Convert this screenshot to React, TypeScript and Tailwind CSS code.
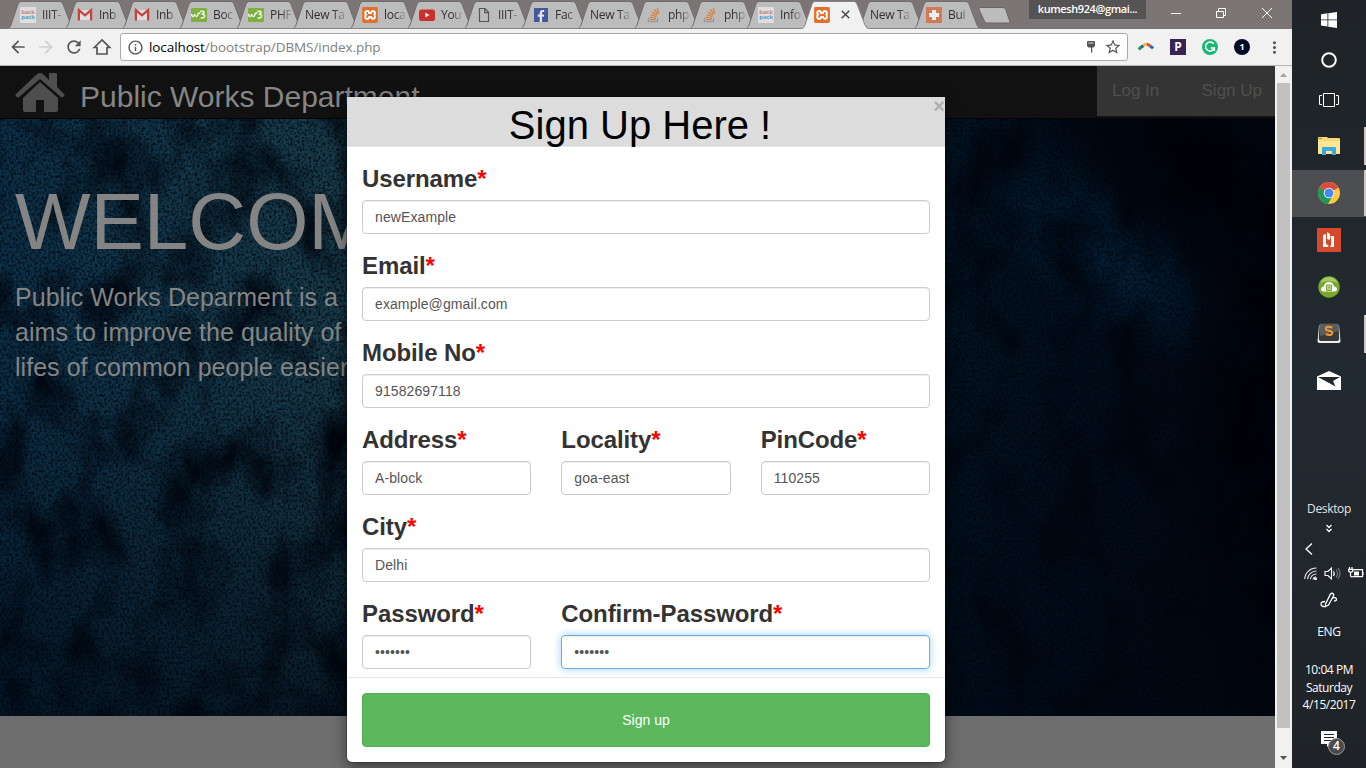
import React from "react";
import { SiXampp } from "react-icons/si";
import { FaStackOverflow, FaFacebookF, FaChrome } from "react-icons/fa";
import { MdArrowBack, MdArrowForward, MdRefresh, MdInfoOutline, MdStarBorder, MdMoreVert } from "react-icons/md";

type IconKind = "backpack" | "gmail" | "w3" | "xampp" | "youtube" | "file" | "facebook" | "stack" | "plus" | "none";

const tabs: { icon: IconKind; label: string; active?: boolean }[] = [
  { icon: "backpack", label: "IIIT-" },
  { icon: "gmail", label: "Inb" },
  { icon: "gmail", label: "Inb" },
  { icon: "w3", label: "Boc" },
  { icon: "w3", label: "PHF" },
  { icon: "none", label: "New Ta" },
  { icon: "xampp", label: "loca" },
  { icon: "youtube", label: "You" },
  { icon: "file", label: "IIIT-" },
  { icon: "facebook", label: "Fac" },
  { icon: "none", label: "New Ta" },
  { icon: "stack", label: "php" },
  { icon: "stack", label: "php" },
  { icon: "backpack", label: "Info" },
  { icon: "xampp", label: "", active: true },
  { icon: "none", label: "New Ta" },
  { icon: "plus", label: "Bui" },
];

function Favicon({ kind }: { kind: IconKind }) {
  switch (kind) {
    case "backpack":
      return (
        <span className="flex h-4 w-4 flex-col items-center justify-center bg-[#dedede] text-[6px] leading-[5px] font-bold tracking-[-0.2px]">
          <span className="text-[#cf8565]">back</span>
          <span className="text-[#5a9bc4]">pack</span>
        </span>
      );
    case "gmail":
      return (
        <svg width="16" height="16" viewBox="0 0 16 16">
          <path d="M2 3h12v10H2z" fill="#dedede" />
          <path d="M1.9 13.5V3.2L8 8.4l6.1-5.2v10.3" fill="none" stroke="#c5433c" strokeWidth="2.2" />
        </svg>
      );
    case "w3":
      return (
        <svg width="16" height="16" viewBox="0 0 16 16">
          <rect y="1" width="16" height="14" rx="1" fill="#7fb03f" />
          <path d="M.5 6.800c.3 3.400 2.700 3.600 3.200.4.500 3.200 3 3 3.400-.2.500-1.200 1.400-1.200 2.200-.6M9.300 4.500q3.700-1 3.700.8 0 1.700-2.300 1.800 3.400 0 2.800 2.400-.8 2.300-3.800 1.300" fill="none" stroke="#f1f5e9" strokeWidth="1.500" />
        </svg>
      );
    case "xampp":
      return (
        <span className="relative flex h-4 w-4 rounded-[3px] bg-white text-[#e0702c]">
          <SiXampp size={16} />
        </span>
      );
    case "youtube":
      return (
        <svg width="16" height="16" viewBox="0 0 16 16">
          <rect y="2.500" width="16" height="11.500" rx="2.500" fill="#c9302c" />
          <path d="M6.300 5.600v5l4.200-2.500z" fill="#eee" />
        </svg>
      );
    case "file":
      return (
        <svg width="16" height="16" viewBox="0 0 16 16">
          <path d="M3.500 1.500h5.500l3.500 3.800v9.200h-9zM8.700 1.800v3.900h3.600" fill="none" stroke="#555" strokeWidth="1.200" />
        </svg>
      );
    case "facebook":
      return (
        <span className="flex h-[14px] w-[14px] items-end justify-end bg-[#42599a] pr-px text-[#e5e5e5]">
          <FaFacebookF size={12} />
        </span>
      );
    case "stack":
      return (
        <svg width="16" height="16" viewBox="0 0 16 16" fill="none">
          <path d="M2.500 10.500v4h9v-4" stroke="#9b9b9b" strokeWidth="1.300" />
          <path d="M4 12.500h6M4.100 10.400l6 .6M4.600 7.800l5.800 1.700M5.800 5l5.200 3.200M8.200 2.300l3.600 4.900M11.400.7l1.200 5.900" stroke="#d9792f" strokeWidth="1.100" />
        </svg>
      );
    case "plus":
      return (
        <svg width="16" height="16" viewBox="0 0 16 16">
          <rect width="16" height="16" fill="#d07b55" />
          <path d="M6 3h4v3h3v4h-3v3H6v-3H3V6h3z" fill="#eee" />
        </svg>
      );
    default:
      return null;
  }
}

function TabStrip() {
  return (
    <div className="flex h-[29px] w-[1292px] overflow-hidden bg-[#7b7575]">
      <div className="flex pl-[7px]">
        {tabs.map((t, i) => (
          <div
            key={i}
            className={
              t.active ? "relative z-10 h-[29px] w-[56px]" : i < 10 ? "relative h-[29px] w-[57px]" : "relative h-[29px] w-[56px]"
            }
          >
            <svg className="absolute top-0 left-0" width="69" height="29" viewBox="0 0 69 29">
              <path
                d="M0 29C3 28 3 27 4 25L11 4Q12 1.500 14 1.500H53Q55 1.500 56 4L64 25Q65 28.500 69 29"
                fill={t.active ? "#f1f1f1" : "#bcbcbc"}
                stroke={t.active ? "#8b8686" : "#716c6c"}
                strokeWidth="1"
              />
              {!t.active && <path d="M0 28.500H69" stroke="#8a8585" />}
            </svg>
            <div className="relative flex h-[29px] items-center gap-[6px] pl-[13px]">
              {t.icon !== "none" && (
                <span className="flex w-4 shrink-0 items-center justify-center">
                  <Favicon kind={t.icon} />
                </span>
              )}
              {t.active ? (
                <svg className="ml-[5px] shrink-0" width="9" height="9" viewBox="0 0 9 9">
                  <path d="M.7.7l7.600 7.600M8.300.7L.7 8.300" stroke="#4a4a4a" strokeWidth="1.500" />
                </svg>
              ) : (
                <span
                  className={
                    t.icon === "none"
                      ? "mt-px w-[40px] bg-linear-to-r from-[#2d2d2d] from-70% to-[#2d2d2d]/20 bg-clip-text text-[12px] tracking-[-0.3px] whitespace-nowrap text-transparent"
                      : "mt-px w-[22px] shrink-0 bg-linear-to-r from-[#2d2d2d] from-50% to-[#2d2d2d]/10 bg-clip-text text-[12px] tracking-[-0.3px] whitespace-nowrap text-transparent"
                  }
                >
                  {t.label}
                </span>
              )}
            </div>
          </div>
        ))}
      </div>
      <svg className="mt-[7px] ml-[9px]" width="34" height="17" viewBox="0 0 34 17">
        <path d="M2 .5h23q2 0 2.700 2l4 11.500q.6 2-1 2H9q-2 0-2.700-2L1 2.500Q.5.500 2 .5z" fill="#bcbcbc" stroke="#6b6565" />
      </svg>
      <div className="mr-[20px] ml-auto flex items-start">
        <div className="flex h-[19px] w-[117px] items-center justify-center bg-[#555353] text-[11px] font-semibold tracking-[-0.4px] text-white">
          kumesh924@gmai...
        </div>
        <svg className="ml-[25px]" width="101" height="28" viewBox="0 0 101 28" fill="none" stroke="#fff">
          <path d="M0 13.500h10M45.500 11.500h7v6h-7zM47.500 11V8.500h7v7H53M91 8l10 10M101 8L91 18" />
        </svg>
      </div>
    </div>
  );
}

function Toolbar() {
  return (
    <div className="flex h-[37px] w-[1292px] items-center border-b border-[#b5b5b5] bg-[#f1f1f1] text-[#555]">
      <div className="flex w-[120px] items-center gap-2 pl-2">
        <MdArrowBack size={20} />
        <MdArrowForward size={20} className="text-[#cfcfcf]" />
        <MdRefresh size={20} />
        <svg width="20" height="20" viewBox="0 0 20 20" fill="none" stroke="#555" strokeWidth="1.700">
          <path d="M2.300 10.500L10 3l7.700 7.500H15V17H5v-6.500z" />
        </svg>
      </div>
      <div className="flex h-7 w-[1008px] items-center rounded-[3px] border border-[#a9a9a9] bg-white pl-[6px]">
        <MdInfoOutline size={17} />
        <span className="ml-[5px] text-[13.500px] tracking-[-0.08px] text-[#808080]">
          <span className="text-black">localhost</span>/bootstrap/DBMS/index.php
        </span>
        <svg className="mr-[8px] ml-auto" width="10" height="14" viewBox="0 0 10 14">
          <path d="M1 2q0-1 1-1h6q1 0 1 1v4L7.500 7.500H6.300V12L5 13V7.500H2.500L1 6z" fill="#555" />
          <path d="M2.500 3h5" stroke="#ddd" />
        </svg>
        <MdStarBorder size={18} className="mr-[5px]" />
      </div>
      <div className="flex items-center gap-4 pl-[10px]">
        <svg width="16" height="16" viewBox="0 0 16 16" fill="none" strokeWidth="3">
          <path d="M.8 10.500Q2 9 4.500 7.200" stroke="#2b8b57" />
          <path d="M3.300 8.100L5.500 6.500" stroke="#2467ac" />
          <path d="M5.200 6.700Q7 5.200 9 5.300" stroke="#f0bd3a" />
          <path d="M8.800 5.300q2 .2 3.600 2" stroke="#df513c" />
          <path d="M12.200 7.200q1.800 1 3 2" stroke="#2467ac" />
        </svg>
        <span className="flex h-4 w-4 items-center justify-center bg-[#3a2353] text-[12px] font-bold text-white">P</span>
        <svg width="16" height="16" viewBox="0 0 16 16">
          <circle cx="8" cy="8" r="8" fill="#1cb777" />
          <path d="M11.700 4.800A4.500 4.500 0 1 0 12.300 9H8.700M12.400 9v3" fill="none" stroke="#fff" strokeWidth="1.500" />
        </svg>
        <span className="flex h-4 w-4 items-center justify-center rounded-full bg-[#050a25] text-[9px] font-bold text-white">1</span>
        <MdMoreVert size={19} className="-ml-px" />
      </div>
    </div>
  );
}

function GrungeBackdrop() {
  return (
    <svg className="absolute inset-0" width="1275" height="597" viewBox="0 0 1275 597">
      <defs>
        <linearGradient id="base" x1="0" y1="0" x2="1" y2="0">
          <stop offset="0" stopColor="#0c3049" />
          <stop offset=".26" stopColor="#183c4c" />
          <stop offset=".5" stopColor="#0c2c45" />
          <stop offset=".75" stopColor="#021323" />
          <stop offset=".87" stopColor="#010d1c" />
          <stop offset="1" stopColor="#01050e" />
        </linearGradient>
        <linearGradient id="fall" x1="0" y1="0" x2="0" y2="1">
          <stop offset=".4" stopColor="#000814" stopOpacity="0" />
          <stop offset="1" stopColor="#000814" stopOpacity=".6" />
        </linearGradient>
        <radialGradient id="dark">
          <stop offset="0" stopColor="#000107" stopOpacity=".9" />
          <stop offset=".5" stopColor="#000107" stopOpacity=".7" />
          <stop offset="1" stopColor="#000107" stopOpacity="0" />
        </radialGradient>
        <radialGradient id="glow">
          <stop offset="0" stopColor="#052845" stopOpacity=".8" />
          <stop offset="1" stopColor="#052845" stopOpacity="0" />
        </radialGradient>
        <filter id="fine" x="0" y="0" width="100%" height="100%" colorInterpolationFilters="sRGB">
          <feTurbulence type="fractalNoise" baseFrequency=".43 .37" numOctaves="2" seed="8" />
          <feColorMatrix values="0 0 0 0 0  0 0 0 0 .01  0 0 0 0 .03  2 0 0 0 -.78" />
        </filter>
        <filter id="coarse" x="0" y="0" width="100%" height="100%" colorInterpolationFilters="sRGB">
          <feTurbulence type="fractalNoise" baseFrequency=".019 .013" numOctaves="6" seed="21" />
          <feColorMatrix values="0 0 0 0 0  0 0 0 0 .02  0 0 0 0 .06  0 2.6 0 0 -1.12" />
        </filter>
      </defs>
      <rect width="1275" height="597" fill="url(#base)" />
      <ellipse cx="1110" cy="140" rx="150" ry="70" fill="url(#glow)" transform="rotate(38 1110 140)" />
      <rect width="1275" height="597" fill="url(#fall)" />
      <ellipse cx="1200" cy="50" rx="200" ry="90" fill="url(#dark)" transform="rotate(35 1200 50)" />
      <ellipse cx="1275" cy="330" rx="100" ry="330" fill="url(#dark)" />
      <rect width="1275" height="597" filter="url(#coarse)" />
      <rect width="1275" height="597" filter="url(#fine)" />
    </svg>
  );
}

function Field({ label, value, focused, wide }: { label: string; value: string; focused?: boolean; wide?: boolean }) {
  return (
    <div className={wide ? "col-span-2" : ""}>
      <label className="block h-[53px] pt-[18px] text-[24px] leading-[27px] font-bold tracking-[-0.1px] text-[#333]">
        {label}
        <span className="text-[#f00]">*</span>
      </label>
      <div
        className={
          focused
            ? "flex h-[34px] items-center rounded-[4px] border border-[#66afe9] px-3 text-[14px] tracking-[0.1px] text-[#555] shadow-[inset_0_1px_1px_rgba(0,0,0,.075),0_0_8px_rgba(102,175,233,.6)]"
            : "flex h-[34px] items-center rounded-[4px] border border-[#ccc] px-3 text-[14px] tracking-[0.1px] text-[#555] shadow-[inset_0_1px_1px_rgba(0,0,0,.075)]"
        }
      >
        {value}
      </div>
    </div>
  );
}

function SignUpModal() {
  return (
    <div className="absolute top-[31px] left-[347px] z-20 flex h-[665px] w-[598px] flex-col rounded-b-[5px] bg-white shadow-[0_0_0_1px_rgba(0,0,0,.2),0_5px_15px_rgba(0,0,0,.5)]">
      <div className="relative h-[50px] border-b border-[#e5e5e5] bg-[#dcdcdc] text-center text-[40px] leading-[57px] text-black">
        <span className="pr-[12px]">Sign Up Here !</span>
        <span className="absolute top-0 right-0 text-[20px] leading-[18px] font-bold text-[#afafaf]">×</span>
      </div>
      <div className="h-[531px] border-b border-[#e5e5e5] px-[15px]">
        <Field label="Username" value="newExample" />
        <Field label="Email" value="example@gmail.com" />
        <Field label="Mobile No" value="91582697118" />
        <div className="grid grid-cols-3 gap-x-[30px]">
          <Field label="Address" value="A-block" />
          <Field label="Locality" value="goa-east" />
          <Field label="PinCode" value="110255" />
        </div>
        <Field label="City" value="Delhi" />
        <div className="grid grid-cols-3 gap-x-[30px]">
          <Field label="Password" value="•••••••" />
          <Field label="Confirm-Password" value="•••••••" focused wide />
        </div>
      </div>
      <div className="px-[15px] pt-[15px]">
        <button className="h-[54px] w-full rounded-[4px] border border-[#4cae4c] bg-[#5cb85c] text-[14px] text-white">Sign up</button>
      </div>
    </div>
  );
}

function Page() {
  return (
    <div className="relative h-[702px] w-[1275px] overflow-hidden bg-[#6e6e6e] font-['Liberation_Sans',Arial,sans-serif]">
      <nav className="flex h-[53px] border-b border-[#040404] bg-[#111]">
        <svg className="mt-[6px] ml-[15px]" width="50" height="41" viewBox="0 0 50 41" fill="#4e4e4e">
          <path d="M1 22L21 3q4-4 8 0l5 5V2q0-1 1-1h6q1 0 1 1v13l7 7q1 1 0 2l-1 1q-1 1-2 0L25 7 4 25q-1 1-2 0l-1-1q-1-1 0-2z" />
          <path d="M25 10L43 26v12q0 2-2 2H30q-1 0-1-1V28h-8v11q0 1-1 1H10q-2 0-2-2V26z" />
        </svg>
        <span className="ml-[15px] pt-[13px] text-[30px] leading-[35px] text-[#858585]">Public Works Department</span>
        <div className="ml-auto flex h-[50px] w-[178px] justify-between bg-[#343434] px-[15px] pr-[13px] text-[17px] leading-[49px] text-[#4f4f4f]">
          <span>Log In</span>
          <span>Sign Up</span>
        </div>
      </nav>
      <section className="relative h-[597px] overflow-hidden bg-[#021023] text-[#848484]">
        <GrungeBackdrop />
        <div className="relative w-[350px] pt-[58px] pl-[15px] whitespace-nowrap">
          <h1 className="text-[80px] leading-[90px]">WELCOME</h1>
          <p className="mt-[13px] text-[25px] leading-[35px] tracking-[0.04px]">
            Public Works Deparment is a r
            <br />
            aims to improve the quality of
            <br />
            lifes of common people easier
          </p>
        </div>
      </section>
      <SignUpModal />
    </div>
  );
}

function Scrollbar() {
  return (
    <div className="flex h-[702px] w-[17px] flex-col items-center bg-[#f1f1f1]">
      <svg width="17" height="17" viewBox="0 0 17 17">
        <path d="M5 11l3.500-4 3.500 4z" fill="#a3a3a3" />
      </svg>
      <div className="h-[645px] w-[13px] bg-[#c1c1c1]" />
      <svg className="mt-auto mb-px" width="17" height="17" viewBox="0 0 17 17">
        <path d="M5 6l3.500 4L12 6z" fill="#505050" />
      </svg>
    </div>
  );
}

function AppSlot({ children, open, active }: { children: React.ReactNode; open?: boolean; active?: boolean }) {
  return (
    <div className={active ? "flex h-[47px] bg-[#4d4e51]" : "flex h-[47px]"}>
      <div className="flex w-[72px] items-center justify-center pb-[2px] pl-[2px]">{children}</div>
      {open && <div className={active ? "h-[46px] w-[2px] bg-[#d5c6c6]" : "mt-[4px] h-[38px] w-[2px] bg-[#d5c6c6]"} />}
    </div>
  );
}

function Taskbar() {
  return (
    <aside className="flex h-[768px] w-[74px] flex-col bg-linear-to-b from-[#1f2327] via-[#222a31] to-[#1f2327] font-['Open_Sans','Noto_Sans',sans-serif] text-white">
      <div className="flex h-10 items-center justify-center">
        <svg width="16" height="16" viewBox="0 0 16 16" fill="#fff">
          <path d="M0 2.200L6.500 1.300v6.200H0zM7.300 1.200L16 0v7.500H7.300zM0 8.300h6.500v6.200L0 13.600zM7.300 8.300H16V16l-8.700-1.200z" />
        </svg>
      </div>
      <div className="flex h-10 items-center justify-center">
        <svg width="16" height="16" viewBox="0 0 16 16">
          <circle cx="8" cy="8" r="6.800" fill="none" stroke="#fff" strokeWidth="2" />
        </svg>
      </div>
      <div className="flex h-10 items-center justify-center">
        <svg width="20" height="14" viewBox="0 0 20 14" fill="none" stroke="#fff">
          <path d="M4.500.5h11v13h-11zM3 2.500H.5v9H3M17 2.500h2.500v9H17" />
        </svg>
      </div>
      <div className="mt-[3px] flex flex-col">
        <AppSlot open>
          <svg width="22" height="18" viewBox="0 0 22 18">
            <path d="M0 1q0-1 1-1h8l1 1h11q1 0 1 1v14q0 1-1 1H1q-1 0-1-1z" fill="#f7d774" />
            <path d="M1 1h3v1H1z" fill="#5eae60" />
            <path d="M0 4h22v12q0 1-1 1H1q-1 0-1-1z" fill="#fde797" />
            <path d="M4 18v-7q0-1 1-1h12q1 0 1 1v7h-4v-4H8v4z" fill="#3aa9dc" />
          </svg>
        </AppSlot>
        <AppSlot open active>
          <svg width="22" height="22" viewBox="0 0 22 22">
            <circle cx="11" cy="11" r="11" fill="#fdc943" />
            <path d="M11 11L1.500 5.500A11 11 0 0 1 20.500 5.500z" fill="#d94b3d" />
            <path d="M1.500 5.500A11 11 0 0 0 10 22l4.800-8.500L11 11z" fill="#21975a" />
            <path d="M11 5.500h9.500L11 8z" fill="#d94b3d" />
            <circle cx="11" cy="11" r="5.300" fill="#fff" />
            <circle cx="11" cy="11" r="4.500" fill="#4688f1" />
          </svg>
        </AppSlot>
        <AppSlot>
          <svg width="24" height="24" viewBox="0 0 24 24">
            <rect width="24" height="24" fill="#d44a2a" />
            <path d="M6 7l3-1v9q0 2 2 2l1 2H6zM10 4l3 2v6l-3-1zM13.500 8H17v11h-5q2-1 2-4z" fill="#fff" />
            <path d="M9.500 11.500q.5 3.500 3.500 3M13.500 10v5.500q0 3-3 4" stroke="#d44a2a" strokeWidth="1.300" fill="none" />
          </svg>
        </AppSlot>
        <AppSlot>
          <svg width="22" height="22" viewBox="0 0 22 22">
            <circle cx="11" cy="11" r="10.700" fill="#78a92b" />
            <path d="M2 7a10 10 0 0 1 18 0q-9-4-18 0z" fill="#a7c967" />
            <path d="M5.500 15.500q-3-.3-2.300-3 .6-2 2.700-2Q6.500 6 11 6q4 0 5 4.500 2.800 0 3 2.500 0 2.500-2.500 2.500z" fill="#fff" />
            <path d="M8.500 9h5v5.500h-5zM10 9v5.500M12 9v5.500M10 11.700h2" stroke="#78a92b" fill="none" />
          </svg>
        </AppSlot>
        <AppSlot open>
          <svg width="24" height="21" viewBox="0 0 24 21">
            <path d="M2 2h20l1.500 16q0 2-2 2h-19q-2 0-2-2z" fill="#eee" />
            <path d="M2.500 1q0-1 1-1h17q1 0 1 1l.7 14q0 3-2 3H3.800q-2 0-2-3z" fill="#3a3a3a" />
            <path d="M3 1h18l.5 7L3 13z" fill="#5c5c5c" />
            <path d="M15.300 4.500q-6.500-2-6.500 1 0 1.600 3.200 2.300 3.300.7 3.300 2.300 0 3-6.500 1.200" fill="none" stroke="#f59a32" strokeWidth="2" />
          </svg>
        </AppSlot>
        <AppSlot>
          <svg width="24" height="19" viewBox="0 0 24 19">
            <path d="M0 5.500L12 0l12 5.500V19H0z" fill="#fff" />
            <path d="M1 6h22l-7 4 2.500 5.500L1 6z" fill="#20272d" />
          </svg>
        </AppSlot>
      </div>
      <div className="mt-[95px] h-[18px] text-center text-[12px] leading-[18px] tracking-[-0.35px] text-[#e2e2e2]">Desktop</div>
      <div className="flex h-5 items-center justify-center">
        <svg width="6" height="9" viewBox="0 0 6 9" fill="none" stroke="#fff" strokeWidth="1.300">
          <path d="M.5 1L3 3.500 5.500 1M.5 5L3 7.500 5.500 5" />
        </svg>
      </div>
      <div className="flex h-[22px] items-center pl-[13px]">
        <svg width="8" height="12" viewBox="0 0 8 12" fill="none" stroke="#fff" strokeWidth="1.300">
          <path d="M7 .5L1 6l6 5.500" />
        </svg>
      </div>
      <div className="flex h-[26px] items-center gap-[7px] pl-[12px]">
        <svg className="shrink-0" width="13" height="13" viewBox="0 0 13 13" fill="none" stroke="#e5e5e5" strokeWidth="1.100">
          <path d="M.7 12A11.500 11.500 0 0 1 12.500 1M3.500 12.300A9 9 0 0 1 12.500 4M6.300 12.300A6 6 0 0 1 12.500 7M9 12.500a3 3 0 0 1 3-2.500" />
          <circle cx="11.500" cy="11.800" r="1" fill="#fff" />
        </svg>
        <svg className="shrink-0" width="17" height="13" viewBox="0 0 17 13" fill="none" stroke="#fff" strokeWidth="1.100">
          <path d="M1 4.500h3L7.500 1v11L4 8.500H1z" />
          <path d="M9.500 4q1.500 2.500 0 5" />
          <path d="M12 2.500q3 4 0 8M14 1q4 5.500 0 11" stroke="#7a7f83" />
        </svg>
        <svg className="shrink-0" width="16" height="12" viewBox="0 0 16 12" fill="none" stroke="#fff" strokeWidth="1.200">
          <path d="M5 2.600h9.500v7H5.500M15 5v3M2.500 5.500v3q0 2 3 1M1.500 0v2M4 0v2M.7 2.300h4v2l-2 1.200L.7 4.300z" />
          <path d="M6 4.500h5v4H6z" fill="#fff" stroke="none" />
        </svg>
      </div>
      <div className="flex h-7 items-center justify-center">
        <svg width="18" height="17" viewBox="0 0 18 17" fill="none" stroke="#fff" strokeWidth="1.300">
          <path d="M5.500 12L10.500 2q1.500-1.500 3 0 .7 1-.3 2.500L8.500 13l-3 1.500zM12.500 6q4-1 4 1.500 0 1.500-2.500 1.500M5 9.500Q1 9.500 1 12q0 3 5 2.500" />
        </svg>
      </div>
      <div className="h-[34px] text-center text-[12px] leading-[35px] tracking-[-0.3px]">ENG</div>
      <div className="mt-3 text-center text-[12px] leading-[17.500px] tracking-[-0.45px] whitespace-nowrap">
        <div className="pt-px">10:04 PM</div>
        <div>Saturday</div>
        <div>4/15/2017</div>
      </div>
      <div className="mt-[17px] ml-[29px] flex">
        <div className="relative">
          <svg width="16" height="16" viewBox="0 0 16 16">
            <path d="M0 0h16v13h-7l-3 3v-3H0z" fill="#fff" />
            <path d="M3 3.500h10M3 6.500h10M3 9.500h7" stroke="#22282e" />
          </svg>
          <span className="absolute top-[7px] left-[7px] flex h-[17px] w-[17px] items-center justify-center rounded-full border border-[#999] bg-[#4b4b4b] text-[12px] font-semibold">4</span>
        </div>
      </div>
    </aside>
  );
}

export default function App() {
  return (
    <div className="flex h-[768px] w-[1366px] overflow-hidden bg-black">
      <div className="flex w-[1292px] flex-col">
        <div className="font-['Open_Sans','Noto_Sans',sans-serif]">
          <TabStrip />
          <Toolbar />
        </div>
        <div className="flex">
          <Page />
          <Scrollbar />
        </div>
      </div>
      <Taskbar />
    </div>
  );
}
